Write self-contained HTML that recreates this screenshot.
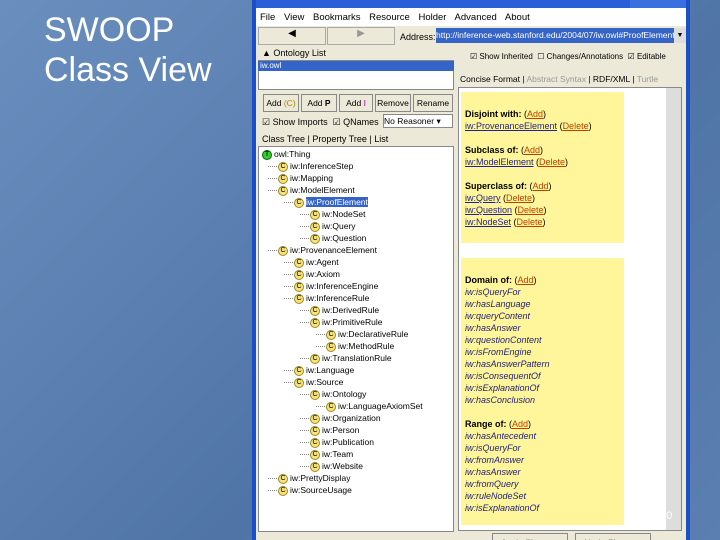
<!DOCTYPE html><html><head><style>
*{margin:0;padding:0;box-sizing:border-box}
html,body{width:720px;height:540px;overflow:hidden}
body{background:linear-gradient(135deg,#6a8fbf,#4f74a6 60%,#5a7fb0);font-family:"Liberation Sans",sans-serif;position:relative}
.a{position:absolute}
.t{font-size:9px;color:#000;white-space:nowrap}
.c{display:inline-block;width:10px;height:10px;border-radius:50%;background:#f4e27a;border:1px solid #a08a20;font-size:7px;line-height:8px;text-align:center;vertical-align:middle;margin-right:2px}
.row{position:absolute;font-size:8.5px;white-space:nowrap;height:12px;line-height:12px}
.btn{position:absolute;background:#ece9d8;border:1px solid #888;font-size:8.5px;text-align:center;line-height:16px}
.y{position:absolute;background:#fff59a;font-size:9px;line-height:12px;padding:4px}
.y i{color:#22227a}
.lk{color:#c04000;text-decoration:underline}
.bl{color:#22228a;text-decoration:underline}
</style></head><body>
<div class="a" style="left:44px;top:10px;color:#fff;font-size:34px;line-height:40px">SWOOP<br>Class View</div>
<div class="a" style="left:252px;top:0;width:438px;height:540px;background:#ece9d8;border-left:4px solid #1a4fc8;border-right:4px solid #1a4fc8"></div>
<div class="a" style="left:256px;top:0;width:430px;height:8px;background:#2a5fd8"></div>
<div class="a" style="left:630px;top:0;width:56px;height:8px;background:#3a6fe0"></div>
<div class="a" style="left:256px;top:8px;width:430px;height:18px;background:#fff"></div>
<div class="a t" style="left:260px;top:12px;font-size:9.5px;word-spacing:6px">File View Bookmarks Resource Holder Advanced About</div>
<div class="a" style="left:258px;top:27px;width:68px;height:18px;border:1px solid #aaa;text-align:center;font-size:10px">◀</div>
<div class="a" style="left:327px;top:27px;width:68px;height:18px;border:1px solid #aaa;text-align:center;font-size:10px;color:#999">▶</div>
<div class="a t" style="left:400px;top:32px">Address:</div>
<div class="a" style="left:436px;top:28px;width:238px;height:15px;background:#3464c8;color:#fff;font-size:8.5px;line-height:15px;white-space:nowrap;overflow:hidden">http://inference-web.stanford.edu/2004/07/iw.owl#ProofElement</div>
<div class="a" style="left:674px;top:28px;width:12px;height:15px;background:#ddd;font-size:7px;text-align:center;line-height:15px">▼</div>
<div class="a t" style="left:262px;top:48px">▲ Ontology List</div>
<div class="a" style="left:258px;top:60px;width:196px;height:30px;background:#fff;border:1px solid #888"></div>
<div class="a" style="left:258px;top:61px;width:196px;height:10px;background:#3464c8;color:#fff;font-size:8px;line-height:10px;padding-left:2px">iw.owl</div>
<div class="btn" style="left:263px;top:94px;width:36px">Add <span style="color:#a80">(C)</span></div>
<div class="btn" style="left:301px;top:94px;width:36px">Add <b>P</b></div>
<div class="btn" style="left:339px;top:94px;width:34px">Add <span style="color:#a0a">I</span></div>
<div class="btn" style="left:375px;top:94px;width:36px">Remove</div>
<div class="btn" style="left:413px;top:94px;width:40px">Rename</div>
<div class="a t" style="left:262px;top:117px">☑ Show Imports &nbsp;☑ QNames</div>
<div class="a" style="left:383px;top:114px;width:70px;height:14px;background:#fff;border:1px solid #888;font-size:8.5px;line-height:12px">No Reasoner ▾</div>
<div class="a t" style="left:262px;top:134px">Class Tree | Property Tree | List</div>
<div class="a" style="left:258px;top:146px;width:196px;height:386px;background:#fff;border:1px solid #888"></div>
<div id="tree"></div>
<div class="a t" style="left:470px;top:52px;font-size:8px">☑ Show Inherited &nbsp;☐ Changes/Annotations &nbsp;☑ Editable</div>
<div class="a t" style="left:460px;top:74px;font-size:8.5px">Concise Format | <span style="color:#999">Abstract Syntax</span> | RDF/XML | <span style="color:#999">Turtle</span></div>
<div class="a" style="left:458px;top:87px;width:224px;height:444px;background:#fff;border:1px solid #888"></div>
<div class="a" style="left:666px;top:88px;width:15px;height:442px;background:#ddd"></div>
<div class="y" style="left:461px;top:92px;width:163px;height:151px"><br><b>Disjoint with:</b> (<span class="lk">Add</span>)<br><span class="bl">iw:ProvenanceElement</span> (<span class="lk">Delete</span>)<br><br><b>Subclass of:</b> (<span class="lk">Add</span>)<br><span class="bl">iw:ModelElement</span> (<span class="lk">Delete</span>)<br><br><b>Superclass of:</b> (<span class="lk">Add</span>)<br><span class="bl">iw:Query</span> (<span class="lk">Delete</span>)<br><span class="bl">iw:Question</span> (<span class="lk">Delete</span>)<br><span class="bl">iw:NodeSet</span> (<span class="lk">Delete</span>)</div>
<div class="y" style="left:461px;top:258px;width:163px;height:267px"><br><b>Domain of:</b> (<span class="lk">Add</span>)<br><i>iw:isQueryFor<br>iw:hasLanguage<br>iw:queryContent<br>iw:hasAnswer<br>iw:questionContent<br>iw:isFromEngine<br>iw:hasAnswerPattern<br>iw:isConsequentOf<br>iw:isExplanationOf<br>iw:hasConclusion</i><br><br><b>Range of:</b> (<span class="lk">Add</span>)<br><i>iw:hasAntecedent<br>iw:isQueryFor<br>iw:fromAnswer<br>iw:hasAnswer<br>iw:fromQuery<br>iw:ruleNodeSet<br>iw:isExplanationOf</i></div>
<div class="btn" style="left:492px;top:533px;width:76px;height:10px;color:#999">Apply Changes</div>
<div class="btn" style="left:575px;top:533px;width:76px;height:10px;color:#999">Undo Changes</div>
<div class="a" style="left:660px;top:510px;color:#fff;font-size:11px">20</div>
<script>
var d=[[0,"owl:Thing"],[1,"iw:InferenceStep"],[1,"iw:Mapping"],[1,"iw:ModelElement"],[2,"iw:ProofElement"],[3,"iw:NodeSet"],[3,"iw:Query"],[3,"iw:Question"],[1,"iw:ProvenanceElement"],[2,"iw:Agent"],[2,"iw:Axiom"],[2,"iw:InferenceEngine"],[2,"iw:InferenceRule"],[3,"iw:DerivedRule"],[3,"iw:PrimitiveRule"],[4,"iw:DeclarativeRule"],[4,"iw:MethodRule"],[3,"iw:TranslationRule"],[2,"iw:Language"],[2,"iw:Source"],[3,"iw:Ontology"],[4,"iw:LanguageAxiomSet"],[3,"iw:Organization"],[3,"iw:Person"],[3,"iw:Publication"],[3,"iw:Team"],[3,"iw:Website"],[1,"iw:PrettyDisplay"],[1,"iw:SourceUsage"]];
var h="";d.forEach(function(r,i){var x=262+r[0]*16,y=148+i*12;
var ic=i==0?'<span class="c" style="background:#3c3;border-color:#060">T</span>':'<span class="c">C</span>';
var txt=i==4?'<span style="background:#3464c8;color:#fff">'+r[1]+'</span>':r[1];
if(i>0)h+='<div class="a" style="left:'+(x-10)+'px;top:'+(y+6)+'px;width:9px;border-top:1px dotted #888"></div>';
h+='<div class="row" style="left:'+x+'px;top:'+y+'px">'+ic+txt+'</div>';});
document.getElementById("tree").innerHTML=h;
</script>
</body></html>
